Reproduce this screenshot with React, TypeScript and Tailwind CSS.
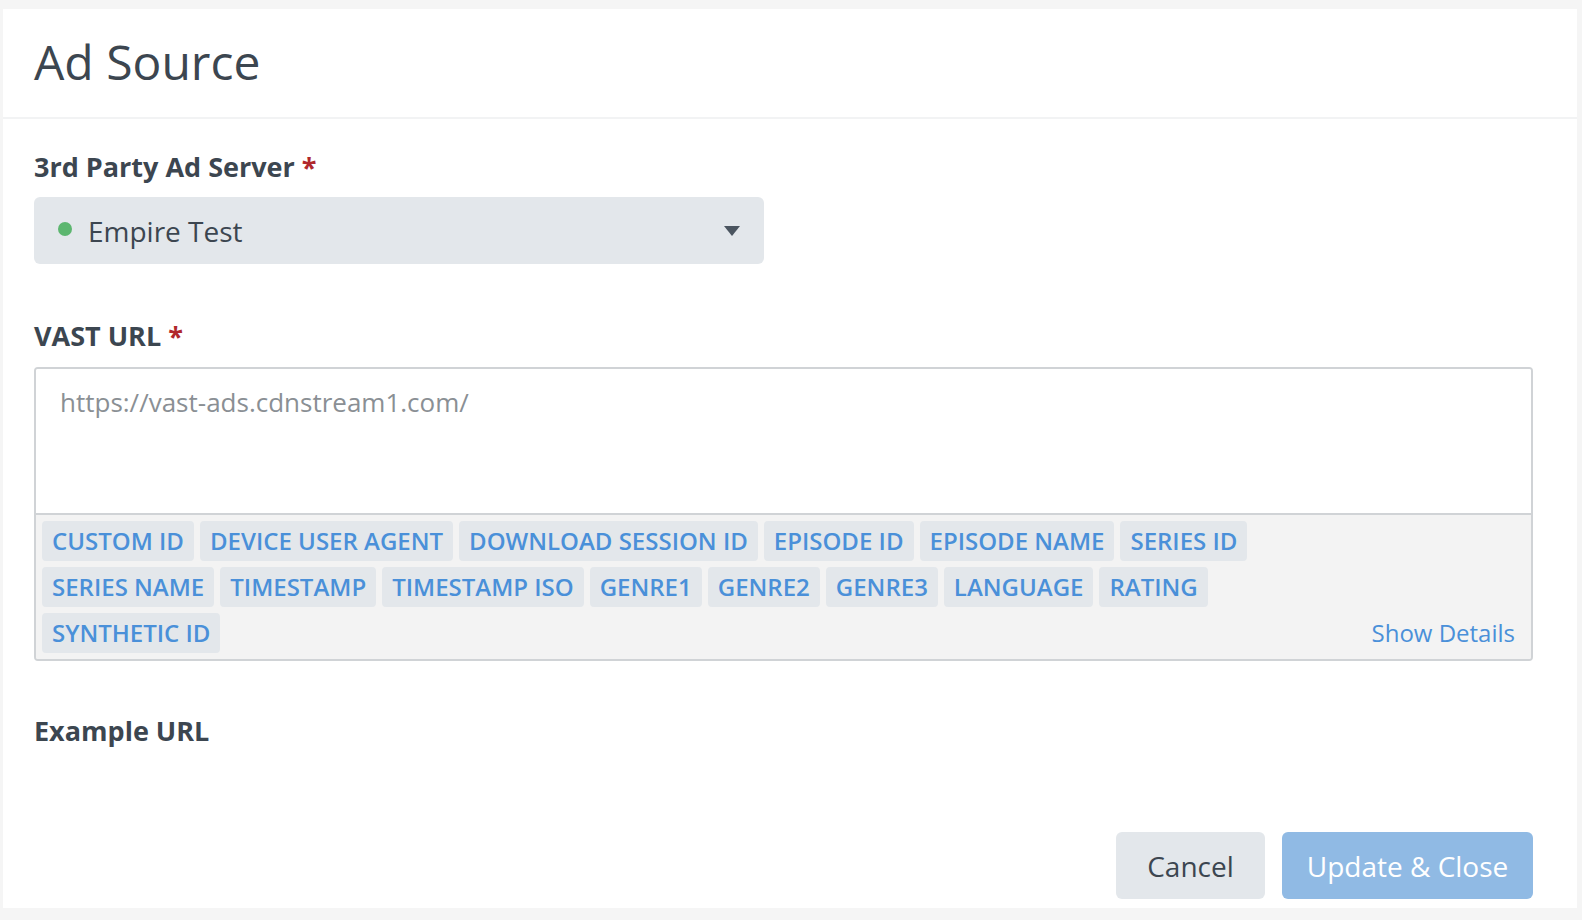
import React from "react";

const tags1 = ["CUSTOM ID","DEVICE USER AGENT","DOWNLOAD SESSION ID","EPISODE ID","EPISODE NAME","SERIES ID"];
const tags2 = ["SERIES NAME","TIMESTAMP","TIMESTAMP ISO","GENRE1","GENRE2","GENRE3","LANGUAGE","RATING"];

function Tag({ t }: { t: string }) {
  return <span className="h-[40px] flex items-center px-[10px] rounded-[4px] bg-[#e3e7eb] text-[#4a90d9] text-[24px] font-semibold">{t}</span>;
}

export default function App() {
  return (
    <div className="w-[1582px] h-[920px] bg-[#f5f5f5] pt-[9px] pl-[3px] pr-[5px] overflow-hidden" style={{ fontFamily: '"Open Sans", sans-serif' }}>
      <div className="bg-white h-[899px] flex flex-col text-[#3c4650]">
        <div className="h-[110px] border-b-2 border-[#f2f3f4] pl-[31px] flex items-center">
          <h1 className="text-[48px] leading-none pb-[2px]">Ad Source</h1>
        </div>
        <div className="pl-[31px] pr-[44px] flex flex-col flex-1">
          <div className="mt-[30px] text-[27px] font-bold leading-[36px]">3rd Party Ad Server <span className="text-[#b0282c]">*</span></div>
          <div className="mt-[12px] w-[730px] h-[67px] rounded-[6px] bg-[#e3e7eb] flex items-center pl-[24px] pr-[24px]">
            <span className="w-[14px] h-[14px] rounded-full bg-[#5cb66f] mb-[4px]"></span>
            <span className="ml-[16px] text-[28px] text-[#3c4650] flex-1">Empire Test</span>
            <svg width="16" height="10" viewBox="0 0 16 10"><path d="M0 0h16L8 10z" fill="#4b5560"/></svg>
          </div>
          <div className="mt-[54px] text-[27px] font-bold leading-[36px]">VAST URL <span className="text-[#b0282c]">*</span></div>
          <div className="mt-[13px] border-2 border-[#d0d3d6] rounded-[4px] overflow-hidden">
            <div className="h-[144px] bg-white px-[24px] pt-[14px] text-[26px] text-[#8a8f94]">https://vast-ads.cdnstream1.com/</div>
            <div className="bg-[#f3f3f3] border-t-2 border-[#d0d3d6] px-[6px] py-[6px] flex flex-col gap-[6px] relative">
              <div className="flex gap-[6px]">{tags1.map(t => <Tag key={t} t={t} />)}</div>
              <div className="flex gap-[6px]">{tags2.map(t => <Tag key={t} t={t} />)}</div>
              <div className="flex gap-[6px] items-center">
                <Tag t="SYNTHETIC ID" />
                <span className="ml-auto mr-[10px] text-[24px] text-[#4a90d9]">Show Details</span>
              </div>
            </div>
          </div>
          <div className="mt-[52px] text-[27px] font-bold leading-[36px]">Example URL</div>
          <div className="mt-auto mb-[9px] flex justify-end gap-[17px]">
            <button className="h-[67px] w-[149px] rounded-[6px] bg-[#e3e7eb] text-[28px] text-[#3c4650]">Cancel</button>
            <button className="h-[67px] w-[251px] rounded-[6px] bg-[#90bae4] text-[28px] text-white">Update &amp; Close</button>
          </div>
        </div>
      </div>
    </div>
  );
}
